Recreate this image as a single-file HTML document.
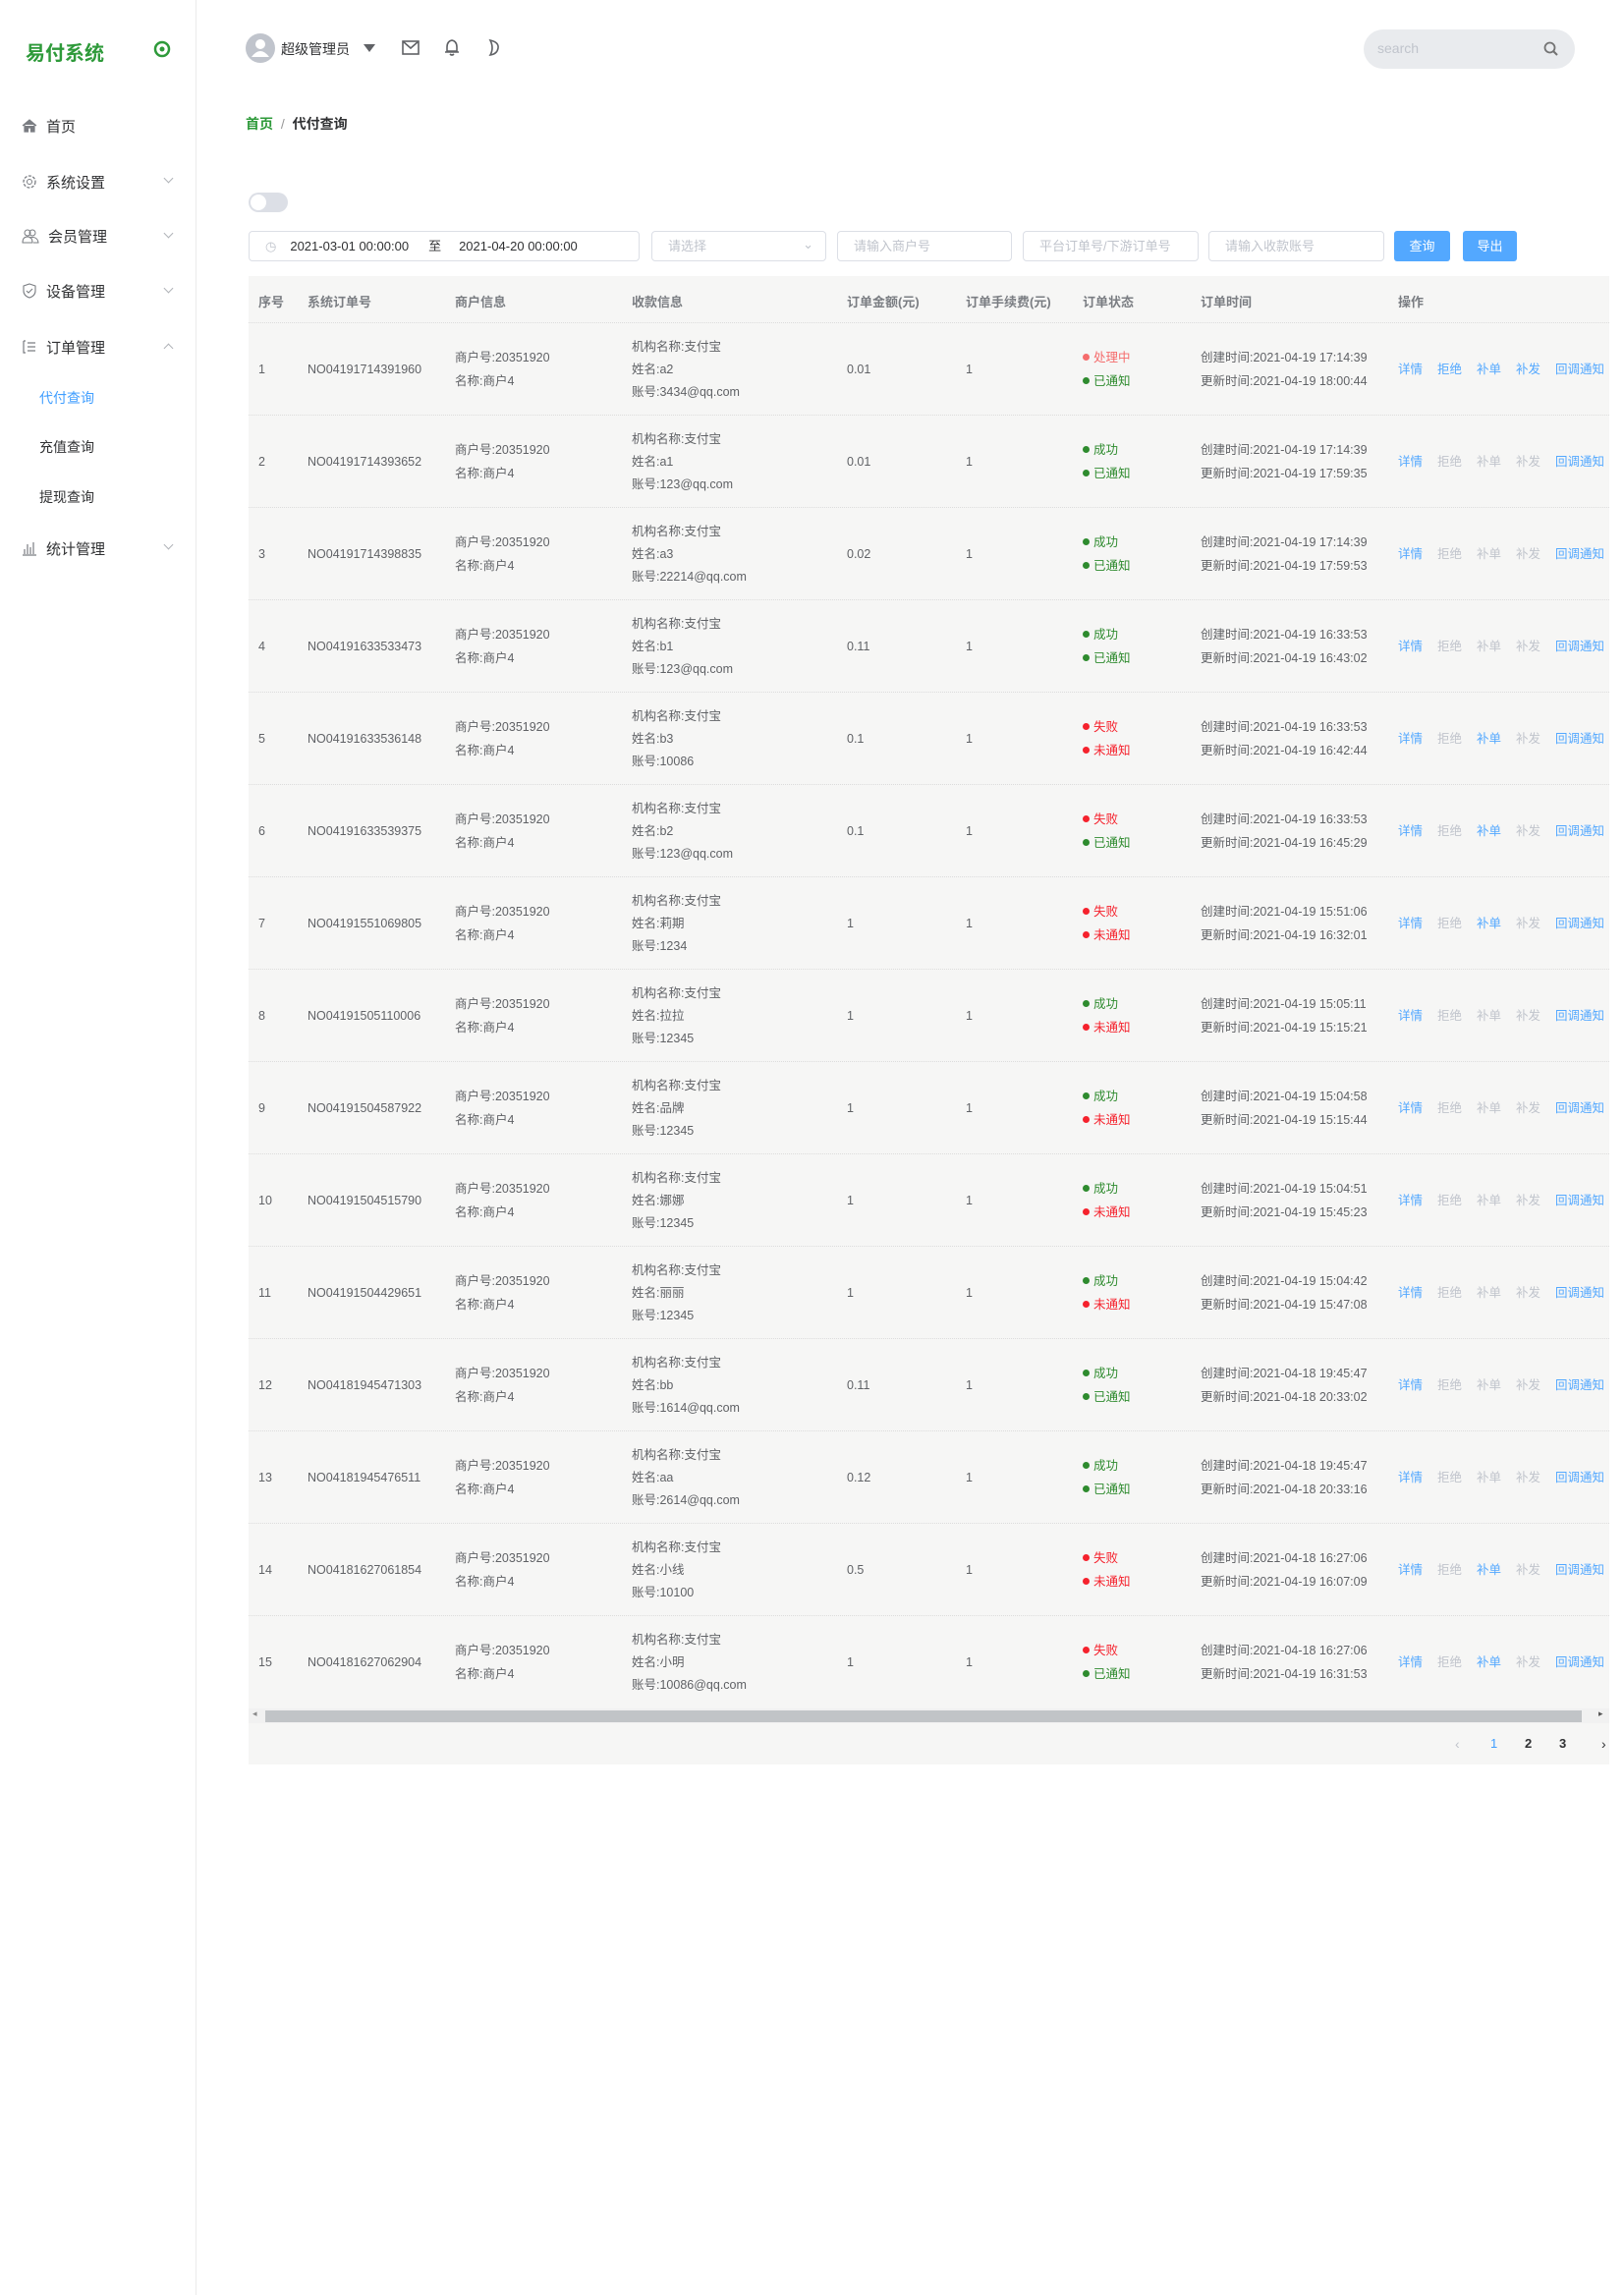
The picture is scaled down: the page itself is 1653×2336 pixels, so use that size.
<!DOCTYPE html>
<html><head><meta charset="utf-8"><style>
*{margin:0;padding:0;box-sizing:border-box}
body{width:1653px;height:2336px;position:relative;background:#fff;font-family:"Liberation Sans","Noto Sans CJK SC",sans-serif;color:#606266;font-size:13px;overflow:hidden}
.a{position:absolute;white-space:nowrap}
.side{position:absolute;left:0;top:0;width:200px;height:2336px;border-right:1px solid #ececec}
.mi{position:absolute;left:22px;font-size:15px;color:#303133;display:flex;align-items:center;height:20px}
.mi svg{margin-right:9px}
.chev{position:absolute;left:168px;width:7px;height:7px;border-right:1px solid #b0b3b8;border-bottom:1px solid #b0b3b8;transform:rotate(45deg)}
.sub{position:absolute;left:40px;font-size:14px;color:#303133}
.inp{position:absolute;top:235px;height:31px;border:1px solid #dcdfe6;border-radius:4px;color:#c0c4cc;font-size:13px;padding-left:16px;line-height:29px;background:#fff}
.btn{position:absolute;top:235px;height:31px;background:#53a8ff;color:#fff;border-radius:3px;text-align:center;line-height:31px;font-size:13px}
.tbl{position:absolute;left:253px;top:281px;width:1385px;height:1515px;background:#f6f6f5}
.th{position:absolute;top:16px;font-weight:bold;color:#7a7d82;font-size:13px}
.r{position:absolute;left:0;width:1385px;height:94px;border-top:1px dotted #dcdcdc}
.r span{position:absolute;white-space:nowrap;line-height:16px;font-size:12.5px}
.d{display:inline-block;width:7px;height:7px;border-radius:50%;margin-right:4px;vertical-align:1px}
.g{color:#2e8b2e}.g .d{background:#2e8b2e}
.rd{color:#f5222d}.rd .d{background:#f5222d}
.pr{color:#f56c6c}.pr .d{background:#f56c6c}
.b{color:#53a8ff}.x{color:#c0c4cc}
</style></head><body>
<div class="side">
<div class="a" style="left:26px;top:38px;font-size:20px;font-weight:bold;color:#2e9a3a">易付系统</div>
<svg class="a" style="left:156px;top:41px" width="18" height="18"><circle cx="9" cy="9" r="7" fill="none" stroke="#2e9a3a" stroke-width="2.5"/><circle cx="9" cy="9" r="2.5" fill="#2e9a3a"/></svg>
<div class="mi" style="top:118px"><svg width="16" height="16"><path d="M1 8 L8 2 L15 8 M3 7 V14 H6.5 V10 H9.5 V14 H13 V7" fill="#7a7d82" stroke="#7a7d82" stroke-width="1.2"/></svg>首页</div>
<div class="mi" style="top:175px"><svg width="16" height="16"><circle cx="8" cy="8" r="6" fill="none" stroke="#7a7d82" stroke-width="1.3" stroke-dasharray="3 1.5"/><circle cx="8" cy="8" r="2.5" fill="none" stroke="#7a7d82"/></svg>系统设置</div>
<div class="chev" style="top:178px"></div>
<div class="mi" style="top:230px"><svg width="18" height="16"><circle cx="6" cy="5" r="3" fill="none" stroke="#7a7d82"/><circle cx="11" cy="5" r="3" fill="none" stroke="#7a7d82"/><path d="M1 15 Q1 9 6 9 Q11 9 11 15Z M8 10 Q16 8 17 15 H12" fill="none" stroke="#7a7d82"/></svg>会员管理</div>
<div class="chev" style="top:234px"></div>
<div class="mi" style="top:286px"><svg width="16" height="16"><path d="M8 1 L14 3 V8 Q14 13 8 15 Q2 13 2 8 V3Z M5 8 L7 10 L11 6" fill="none" stroke="#7a7d82" stroke-width="1.1"/></svg>设备管理</div>
<div class="chev" style="top:290px"></div>
<div class="mi" style="top:343px"><svg width="16" height="16"><path d="M2 2 V14 H4 M2 2 H4 M6 4 H14 M6 8 H14 M6 12 H14" fill="none" stroke="#7a7d82" stroke-width="1.2"/></svg>订单管理</div>
<div class="chev" style="top:351px;transform:rotate(225deg)"></div>
<div class="sub" style="top:395px;color:#409eff">代付查询</div>
<div class="sub" style="top:445px">充值查询</div>
<div class="sub" style="top:496px">提现查询</div>
<div class="mi" style="top:548px"><svg width="16" height="16"><path d="M1 15 H15 M3 14 V9 M6 14 V4 M9 14 V7 M12 14 V2" fill="none" stroke="#7a7d82" stroke-width="1.2"/></svg>统计管理</div>
<div class="chev" style="top:551px"></div>
</div>
<svg class="a" style="left:250px;top:34px" width="30" height="30"><circle cx="15" cy="15" r="15" fill="#c0c4cc"/><circle cx="15" cy="11" r="5" fill="#fff"/><path d="M6 24 Q15 12 24 24Z" fill="#fff"/></svg>
<div class="a" style="left:286px;top:40px;font-size:14px;color:#303133">超级管理员</div>
<svg class="a" style="left:369px;top:44px" width="14" height="10"><path d="M1 1 H13 L7 9Z" fill="#606266"/></svg>
<svg class="a" style="left:409px;top:41px" width="18" height="16"><rect x="1" y="1" width="16" height="13" fill="none" stroke="#606266" stroke-width="1.6"/><path d="M1 1 L9 8 L17 1" fill="none" stroke="#606266" stroke-width="1.6"/></svg>
<svg class="a" style="left:452px;top:39px" width="16" height="19"><path d="M8 2 Q3 3 3 9 V13 H13 V9 Q13 3 8 2Z M1 14 H15 M6 16 Q8 18 10 16" fill="none" stroke="#606266" stroke-width="1.6"/></svg>
<svg class="a" style="left:496px;top:39px" width="14" height="19"><path d="M3 2 Q12 4 11 10 Q10 16 3 17 Q7 10 3 2Z" fill="none" stroke="#606266" stroke-width="1.6"/></svg>
<div class="a" style="left:1388px;top:30px;width:215px;height:40px;border-radius:20px;background:#e9ebee"></div>
<div class="a" style="left:1402px;top:41px;color:#c0c4cc;font-size:14px">search</div>
<svg class="a" style="left:1570px;top:41px" width="18" height="18"><circle cx="7.5" cy="7.5" r="5" fill="none" stroke="#737373" stroke-width="1.8"/><path d="M11 11 L15 15" stroke="#737373" stroke-width="2"/></svg>
<div class="a" style="left:250px;top:116px;font-size:14px;font-weight:bold;color:#2e9a3a">首页 <span style="color:#999;font-weight:normal;margin:0 4px">/</span> <span style="color:#303133">代付查询</span></div>
<div class="a" style="left:253px;top:196px;width:40px;height:20px;border-radius:10px;background:#dcdfe6"></div>
<div class="a" style="left:255px;top:198px;width:16px;height:16px;border-radius:50%;background:#fff"></div>
<div class="inp" style="left:253px;width:398px;color:#303133"><span style="color:#c0c4cc;margin-right:14px">◷</span>2021-03-01 00:00:00<span style="margin:0 18px 0 20px">至</span>2021-04-20 00:00:00</div>
<div class="inp" style="left:663px;width:178px">请选择<span style="position:absolute;right:12px;top:-2px;color:#c0c4cc">⌄</span></div>
<div class="inp" style="left:852px;width:178px">请输入商户号</div>
<div class="inp" style="left:1041px;width:179px">平台订单号/下游订单号</div>
<div class="inp" style="left:1230px;width:179px">请输入收款账号</div>
<div class="btn" style="left:1419px;width:57px">查询</div>
<div class="btn" style="left:1489px;width:55px">导出</div>
<div class="tbl">
<div class="th" style="left:10px">序号</div><div class="th" style="left:60px">系统订单号</div><div class="th" style="left:210px">商户信息</div><div class="th" style="left:390px">收款信息</div><div class="th" style="left:609px">订单金额(元)</div><div class="th" style="left:730px">订单手续费(元)</div><div class="th" style="left:849px">订单状态</div><div class="th" style="left:969px">订单时间</div><div class="th" style="left:1170px">操作</div>

<div class="r" style="top:47px"><span style="left:10px;top:39px">1</span><span style="left:60px;top:39px">NO04191714391960</span><span style="left:210px;top:27px">商户号:20351920</span><span style="left:210px;top:51px">名称:商户4</span><span style="left:390px;top:16px">机构名称:支付宝</span><span style="left:390px;top:39px">姓名:a2</span><span style="left:390px;top:62px">账号:3434@qq.com</span><span style="left:609px;top:39px">0.01</span><span style="left:730px;top:39px">1</span><span class="pr" style="left:849px;top:27px"><i class="d"></i>处理中</span><span class="g" style="left:849px;top:51px"><i class="d"></i>已通知</span><span style="left:969px;top:27px">创建时间:2021-04-19 17:14:39</span><span style="left:969px;top:51px">更新时间:2021-04-19 18:00:44</span><span class="b" style="left:1170px;top:39px">详情</span><span class="b" style="left:1210px;top:39px">拒绝</span><span class="b" style="left:1250px;top:39px">补单</span><span class="b" style="left:1290px;top:39px">补发</span><span class="b" style="left:1330px;top:39px">回调通知</span></div>

<div class="r" style="top:141px"><span style="left:10px;top:39px">2</span><span style="left:60px;top:39px">NO04191714393652</span><span style="left:210px;top:27px">商户号:20351920</span><span style="left:210px;top:51px">名称:商户4</span><span style="left:390px;top:16px">机构名称:支付宝</span><span style="left:390px;top:39px">姓名:a1</span><span style="left:390px;top:62px">账号:123@qq.com</span><span style="left:609px;top:39px">0.01</span><span style="left:730px;top:39px">1</span><span class="g" style="left:849px;top:27px"><i class="d"></i>成功</span><span class="g" style="left:849px;top:51px"><i class="d"></i>已通知</span><span style="left:969px;top:27px">创建时间:2021-04-19 17:14:39</span><span style="left:969px;top:51px">更新时间:2021-04-19 17:59:35</span><span class="b" style="left:1170px;top:39px">详情</span><span class="x" style="left:1210px;top:39px">拒绝</span><span class="x" style="left:1250px;top:39px">补单</span><span class="x" style="left:1290px;top:39px">补发</span><span class="b" style="left:1330px;top:39px">回调通知</span></div>

<div class="r" style="top:235px"><span style="left:10px;top:39px">3</span><span style="left:60px;top:39px">NO04191714398835</span><span style="left:210px;top:27px">商户号:20351920</span><span style="left:210px;top:51px">名称:商户4</span><span style="left:390px;top:16px">机构名称:支付宝</span><span style="left:390px;top:39px">姓名:a3</span><span style="left:390px;top:62px">账号:22214@qq.com</span><span style="left:609px;top:39px">0.02</span><span style="left:730px;top:39px">1</span><span class="g" style="left:849px;top:27px"><i class="d"></i>成功</span><span class="g" style="left:849px;top:51px"><i class="d"></i>已通知</span><span style="left:969px;top:27px">创建时间:2021-04-19 17:14:39</span><span style="left:969px;top:51px">更新时间:2021-04-19 17:59:53</span><span class="b" style="left:1170px;top:39px">详情</span><span class="x" style="left:1210px;top:39px">拒绝</span><span class="x" style="left:1250px;top:39px">补单</span><span class="x" style="left:1290px;top:39px">补发</span><span class="b" style="left:1330px;top:39px">回调通知</span></div>

<div class="r" style="top:329px"><span style="left:10px;top:39px">4</span><span style="left:60px;top:39px">NO04191633533473</span><span style="left:210px;top:27px">商户号:20351920</span><span style="left:210px;top:51px">名称:商户4</span><span style="left:390px;top:16px">机构名称:支付宝</span><span style="left:390px;top:39px">姓名:b1</span><span style="left:390px;top:62px">账号:123@qq.com</span><span style="left:609px;top:39px">0.11</span><span style="left:730px;top:39px">1</span><span class="g" style="left:849px;top:27px"><i class="d"></i>成功</span><span class="g" style="left:849px;top:51px"><i class="d"></i>已通知</span><span style="left:969px;top:27px">创建时间:2021-04-19 16:33:53</span><span style="left:969px;top:51px">更新时间:2021-04-19 16:43:02</span><span class="b" style="left:1170px;top:39px">详情</span><span class="x" style="left:1210px;top:39px">拒绝</span><span class="x" style="left:1250px;top:39px">补单</span><span class="x" style="left:1290px;top:39px">补发</span><span class="b" style="left:1330px;top:39px">回调通知</span></div>

<div class="r" style="top:423px"><span style="left:10px;top:39px">5</span><span style="left:60px;top:39px">NO04191633536148</span><span style="left:210px;top:27px">商户号:20351920</span><span style="left:210px;top:51px">名称:商户4</span><span style="left:390px;top:16px">机构名称:支付宝</span><span style="left:390px;top:39px">姓名:b3</span><span style="left:390px;top:62px">账号:10086</span><span style="left:609px;top:39px">0.1</span><span style="left:730px;top:39px">1</span><span class="rd" style="left:849px;top:27px"><i class="d"></i>失败</span><span class="rd" style="left:849px;top:51px"><i class="d"></i>未通知</span><span style="left:969px;top:27px">创建时间:2021-04-19 16:33:53</span><span style="left:969px;top:51px">更新时间:2021-04-19 16:42:44</span><span class="b" style="left:1170px;top:39px">详情</span><span class="x" style="left:1210px;top:39px">拒绝</span><span class="b" style="left:1250px;top:39px">补单</span><span class="x" style="left:1290px;top:39px">补发</span><span class="b" style="left:1330px;top:39px">回调通知</span></div>

<div class="r" style="top:517px"><span style="left:10px;top:39px">6</span><span style="left:60px;top:39px">NO04191633539375</span><span style="left:210px;top:27px">商户号:20351920</span><span style="left:210px;top:51px">名称:商户4</span><span style="left:390px;top:16px">机构名称:支付宝</span><span style="left:390px;top:39px">姓名:b2</span><span style="left:390px;top:62px">账号:123@qq.com</span><span style="left:609px;top:39px">0.1</span><span style="left:730px;top:39px">1</span><span class="rd" style="left:849px;top:27px"><i class="d"></i>失败</span><span class="g" style="left:849px;top:51px"><i class="d"></i>已通知</span><span style="left:969px;top:27px">创建时间:2021-04-19 16:33:53</span><span style="left:969px;top:51px">更新时间:2021-04-19 16:45:29</span><span class="b" style="left:1170px;top:39px">详情</span><span class="x" style="left:1210px;top:39px">拒绝</span><span class="b" style="left:1250px;top:39px">补单</span><span class="x" style="left:1290px;top:39px">补发</span><span class="b" style="left:1330px;top:39px">回调通知</span></div>

<div class="r" style="top:611px"><span style="left:10px;top:39px">7</span><span style="left:60px;top:39px">NO04191551069805</span><span style="left:210px;top:27px">商户号:20351920</span><span style="left:210px;top:51px">名称:商户4</span><span style="left:390px;top:16px">机构名称:支付宝</span><span style="left:390px;top:39px">姓名:莉期</span><span style="left:390px;top:62px">账号:1234</span><span style="left:609px;top:39px">1</span><span style="left:730px;top:39px">1</span><span class="rd" style="left:849px;top:27px"><i class="d"></i>失败</span><span class="rd" style="left:849px;top:51px"><i class="d"></i>未通知</span><span style="left:969px;top:27px">创建时间:2021-04-19 15:51:06</span><span style="left:969px;top:51px">更新时间:2021-04-19 16:32:01</span><span class="b" style="left:1170px;top:39px">详情</span><span class="x" style="left:1210px;top:39px">拒绝</span><span class="b" style="left:1250px;top:39px">补单</span><span class="x" style="left:1290px;top:39px">补发</span><span class="b" style="left:1330px;top:39px">回调通知</span></div>

<div class="r" style="top:705px"><span style="left:10px;top:39px">8</span><span style="left:60px;top:39px">NO04191505110006</span><span style="left:210px;top:27px">商户号:20351920</span><span style="left:210px;top:51px">名称:商户4</span><span style="left:390px;top:16px">机构名称:支付宝</span><span style="left:390px;top:39px">姓名:拉拉</span><span style="left:390px;top:62px">账号:12345</span><span style="left:609px;top:39px">1</span><span style="left:730px;top:39px">1</span><span class="g" style="left:849px;top:27px"><i class="d"></i>成功</span><span class="rd" style="left:849px;top:51px"><i class="d"></i>未通知</span><span style="left:969px;top:27px">创建时间:2021-04-19 15:05:11</span><span style="left:969px;top:51px">更新时间:2021-04-19 15:15:21</span><span class="b" style="left:1170px;top:39px">详情</span><span class="x" style="left:1210px;top:39px">拒绝</span><span class="x" style="left:1250px;top:39px">补单</span><span class="x" style="left:1290px;top:39px">补发</span><span class="b" style="left:1330px;top:39px">回调通知</span></div>

<div class="r" style="top:799px"><span style="left:10px;top:39px">9</span><span style="left:60px;top:39px">NO04191504587922</span><span style="left:210px;top:27px">商户号:20351920</span><span style="left:210px;top:51px">名称:商户4</span><span style="left:390px;top:16px">机构名称:支付宝</span><span style="left:390px;top:39px">姓名:品牌</span><span style="left:390px;top:62px">账号:12345</span><span style="left:609px;top:39px">1</span><span style="left:730px;top:39px">1</span><span class="g" style="left:849px;top:27px"><i class="d"></i>成功</span><span class="rd" style="left:849px;top:51px"><i class="d"></i>未通知</span><span style="left:969px;top:27px">创建时间:2021-04-19 15:04:58</span><span style="left:969px;top:51px">更新时间:2021-04-19 15:15:44</span><span class="b" style="left:1170px;top:39px">详情</span><span class="x" style="left:1210px;top:39px">拒绝</span><span class="x" style="left:1250px;top:39px">补单</span><span class="x" style="left:1290px;top:39px">补发</span><span class="b" style="left:1330px;top:39px">回调通知</span></div>

<div class="r" style="top:893px"><span style="left:10px;top:39px">10</span><span style="left:60px;top:39px">NO04191504515790</span><span style="left:210px;top:27px">商户号:20351920</span><span style="left:210px;top:51px">名称:商户4</span><span style="left:390px;top:16px">机构名称:支付宝</span><span style="left:390px;top:39px">姓名:娜娜</span><span style="left:390px;top:62px">账号:12345</span><span style="left:609px;top:39px">1</span><span style="left:730px;top:39px">1</span><span class="g" style="left:849px;top:27px"><i class="d"></i>成功</span><span class="rd" style="left:849px;top:51px"><i class="d"></i>未通知</span><span style="left:969px;top:27px">创建时间:2021-04-19 15:04:51</span><span style="left:969px;top:51px">更新时间:2021-04-19 15:45:23</span><span class="b" style="left:1170px;top:39px">详情</span><span class="x" style="left:1210px;top:39px">拒绝</span><span class="x" style="left:1250px;top:39px">补单</span><span class="x" style="left:1290px;top:39px">补发</span><span class="b" style="left:1330px;top:39px">回调通知</span></div>

<div class="r" style="top:987px"><span style="left:10px;top:39px">11</span><span style="left:60px;top:39px">NO04191504429651</span><span style="left:210px;top:27px">商户号:20351920</span><span style="left:210px;top:51px">名称:商户4</span><span style="left:390px;top:16px">机构名称:支付宝</span><span style="left:390px;top:39px">姓名:丽丽</span><span style="left:390px;top:62px">账号:12345</span><span style="left:609px;top:39px">1</span><span style="left:730px;top:39px">1</span><span class="g" style="left:849px;top:27px"><i class="d"></i>成功</span><span class="rd" style="left:849px;top:51px"><i class="d"></i>未通知</span><span style="left:969px;top:27px">创建时间:2021-04-19 15:04:42</span><span style="left:969px;top:51px">更新时间:2021-04-19 15:47:08</span><span class="b" style="left:1170px;top:39px">详情</span><span class="x" style="left:1210px;top:39px">拒绝</span><span class="x" style="left:1250px;top:39px">补单</span><span class="x" style="left:1290px;top:39px">补发</span><span class="b" style="left:1330px;top:39px">回调通知</span></div>

<div class="r" style="top:1081px"><span style="left:10px;top:39px">12</span><span style="left:60px;top:39px">NO04181945471303</span><span style="left:210px;top:27px">商户号:20351920</span><span style="left:210px;top:51px">名称:商户4</span><span style="left:390px;top:16px">机构名称:支付宝</span><span style="left:390px;top:39px">姓名:bb</span><span style="left:390px;top:62px">账号:1614@qq.com</span><span style="left:609px;top:39px">0.11</span><span style="left:730px;top:39px">1</span><span class="g" style="left:849px;top:27px"><i class="d"></i>成功</span><span class="g" style="left:849px;top:51px"><i class="d"></i>已通知</span><span style="left:969px;top:27px">创建时间:2021-04-18 19:45:47</span><span style="left:969px;top:51px">更新时间:2021-04-18 20:33:02</span><span class="b" style="left:1170px;top:39px">详情</span><span class="x" style="left:1210px;top:39px">拒绝</span><span class="x" style="left:1250px;top:39px">补单</span><span class="x" style="left:1290px;top:39px">补发</span><span class="b" style="left:1330px;top:39px">回调通知</span></div>

<div class="r" style="top:1175px"><span style="left:10px;top:39px">13</span><span style="left:60px;top:39px">NO04181945476511</span><span style="left:210px;top:27px">商户号:20351920</span><span style="left:210px;top:51px">名称:商户4</span><span style="left:390px;top:16px">机构名称:支付宝</span><span style="left:390px;top:39px">姓名:aa</span><span style="left:390px;top:62px">账号:2614@qq.com</span><span style="left:609px;top:39px">0.12</span><span style="left:730px;top:39px">1</span><span class="g" style="left:849px;top:27px"><i class="d"></i>成功</span><span class="g" style="left:849px;top:51px"><i class="d"></i>已通知</span><span style="left:969px;top:27px">创建时间:2021-04-18 19:45:47</span><span style="left:969px;top:51px">更新时间:2021-04-18 20:33:16</span><span class="b" style="left:1170px;top:39px">详情</span><span class="x" style="left:1210px;top:39px">拒绝</span><span class="x" style="left:1250px;top:39px">补单</span><span class="x" style="left:1290px;top:39px">补发</span><span class="b" style="left:1330px;top:39px">回调通知</span></div>

<div class="r" style="top:1269px"><span style="left:10px;top:39px">14</span><span style="left:60px;top:39px">NO04181627061854</span><span style="left:210px;top:27px">商户号:20351920</span><span style="left:210px;top:51px">名称:商户4</span><span style="left:390px;top:16px">机构名称:支付宝</span><span style="left:390px;top:39px">姓名:小线</span><span style="left:390px;top:62px">账号:10100</span><span style="left:609px;top:39px">0.5</span><span style="left:730px;top:39px">1</span><span class="rd" style="left:849px;top:27px"><i class="d"></i>失败</span><span class="rd" style="left:849px;top:51px"><i class="d"></i>未通知</span><span style="left:969px;top:27px">创建时间:2021-04-18 16:27:06</span><span style="left:969px;top:51px">更新时间:2021-04-19 16:07:09</span><span class="b" style="left:1170px;top:39px">详情</span><span class="x" style="left:1210px;top:39px">拒绝</span><span class="b" style="left:1250px;top:39px">补单</span><span class="x" style="left:1290px;top:39px">补发</span><span class="b" style="left:1330px;top:39px">回调通知</span></div>

<div class="r" style="top:1363px"><span style="left:10px;top:39px">15</span><span style="left:60px;top:39px">NO04181627062904</span><span style="left:210px;top:27px">商户号:20351920</span><span style="left:210px;top:51px">名称:商户4</span><span style="left:390px;top:16px">机构名称:支付宝</span><span style="left:390px;top:39px">姓名:小明</span><span style="left:390px;top:62px">账号:10086@qq.com</span><span style="left:609px;top:39px">1</span><span style="left:730px;top:39px">1</span><span class="rd" style="left:849px;top:27px"><i class="d"></i>失败</span><span class="g" style="left:849px;top:51px"><i class="d"></i>已通知</span><span style="left:969px;top:27px">创建时间:2021-04-18 16:27:06</span><span style="left:969px;top:51px">更新时间:2021-04-19 16:31:53</span><span class="b" style="left:1170px;top:39px">详情</span><span class="x" style="left:1210px;top:39px">拒绝</span><span class="b" style="left:1250px;top:39px">补单</span><span class="x" style="left:1290px;top:39px">补发</span><span class="b" style="left:1330px;top:39px">回调通知</span></div>

<div class="a" style="left:0;top:1458px;width:1385px;height:15px;background:#f1f1f1"></div>
<div class="a" style="left:17px;top:1460px;width:1340px;height:12px;background:#c1c4c7"></div>
<div class="a" style="left:4px;top:1458px;font-size:9px;color:#888">◂</div>
<div class="a" style="left:1374px;top:1458px;font-size:9px;color:#555">▸</div>
<div class="a" style="left:1228px;top:1486px;font-size:14px;color:#c0c4cc">‹</div>
<div class="a" style="left:1264px;top:1486px;font-size:13px;color:#409eff">1</div>
<div class="a" style="left:1299px;top:1486px;font-size:13px;color:#303133;font-weight:bold">2</div>
<div class="a" style="left:1334px;top:1486px;font-size:13px;color:#303133;font-weight:bold">3</div>
<div class="a" style="left:1377px;top:1486px;font-size:14px;color:#303133">›</div>
</div>
</body></html>
